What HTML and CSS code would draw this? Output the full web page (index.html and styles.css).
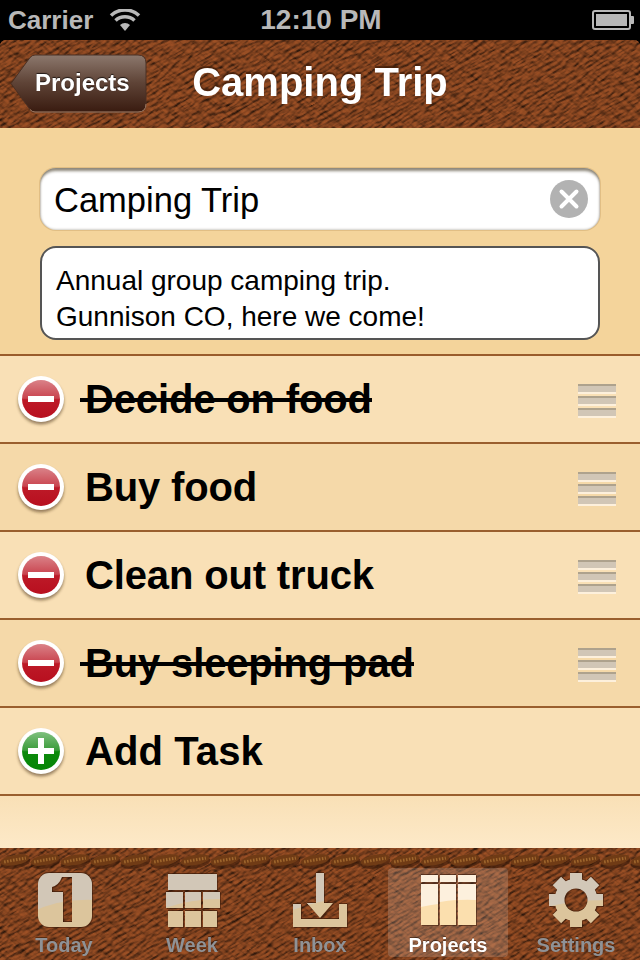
FILE: index.html
```html
<!DOCTYPE html>
<html lang="en">
<head>
<meta charset="utf-8">
<title>Camping Trip</title>
<link rel="stylesheet" href="styles.css">
</head>
<body>
<svg class="defs" width="0" height="0" aria-hidden="true">
  <defs>
    <filter id="leather" x="0" y="0" width="100%" height="100%" color-interpolation-filters="sRGB">
      <feTurbulence type="fractalNoise" baseFrequency="0.1 0.36" numOctaves="3" seed="7" result="n"/>
      <feDiffuseLighting in="n" surfaceScale="2.4" diffuseConstant="1.08" lighting-color="#9c5024" result="l">
        <feDistantLight azimuth="90" elevation="55"/>
      </feDiffuseLighting>
      <feComposite in="l" in2="SourceGraphic" operator="in"/>
    </filter>
    <filter id="leatherB" x="0" y="0" width="100%" height="100%" color-interpolation-filters="sRGB">
      <feTurbulence type="fractalNoise" baseFrequency="0.035 0.22" numOctaves="3" seed="23" result="n"/>
      <feDiffuseLighting in="n" surfaceScale="2.4" diffuseConstant="1.05" lighting-color="#8a4520" result="l">
        <feDistantLight azimuth="90" elevation="55"/>
      </feDiffuseLighting>
      <feComposite in="l" in2="SourceGraphic" operator="in"/>
    </filter>
    <linearGradient id="backGrad" x1="0" y1="0" x2="0" y2="1">
      <stop offset="0" stop-color="#8c786d"/>
      <stop offset=".48" stop-color="#5f4437"/>
      <stop offset="1" stop-color="#391b10"/>
    </linearGradient>
    <linearGradient id="redGrad" x1="0" y1="0" x2="0" y2="1">
      <stop offset="0" stop-color="#da8288"/>
      <stop offset=".48" stop-color="#c9444f"/>
      <stop offset=".52" stop-color="#bd1a28"/>
      <stop offset="1" stop-color="#b80f1f"/>
    </linearGradient>
    <linearGradient id="greenGrad" x1="0" y1="0" x2="0" y2="1">
      <stop offset="0" stop-color="#7fc07f"/>
      <stop offset=".48" stop-color="#3a9c3a"/>
      <stop offset=".52" stop-color="#0b8a0b"/>
      <stop offset="1" stop-color="#068506"/>
    </linearGradient>
    <filter id="softShadow" x="-20%" y="-20%" width="140%" height="140%"><feGaussianBlur stdDeviation="1.600"/></filter>
    <pattern id="stitch" width="30" height="24" patternUnits="userSpaceOnUse">
      <g transform="rotate(-10 15 12)">
        <ellipse cx="15" cy="14.500" rx="15" ry="6" fill="#2f1406" opacity=".55"/>
        <ellipse cx="15" cy="12" rx="14.500" ry="5.200" fill="#703b15"/>
        <line x1="4" y1="12" x2="26" y2="12" stroke="#a0672c" stroke-width="3" stroke-dasharray="1.500 1.500"/>
      </g>
    </pattern>
    <mask id="gearMask" maskUnits="userSpaceOnUse" x="544" y="868" width="64" height="64">
      <circle cx="576" cy="900" r="21.500" fill="#fff"/>
      <g fill="#fff">
        <rect x="570" y="873" width="12" height="54"/>
        <rect x="549" y="894" width="54" height="12"/>
        <rect x="570" y="873" width="12" height="54" transform="rotate(45 576 900)"/>
        <rect x="570" y="873" width="12" height="54" transform="rotate(-45 576 900)"/>
      </g>
      <circle cx="576" cy="900" r="11.500" fill="#000"/>
    </mask>
    <clipPath id="inboxClip">
      <path d="M316 873h8v30h9l-13 15-13-15h9z"/>
      <path d="M293 904h8v15h38v-15h8v23h-54z"/>
    </clipPath>
    <clipPath id="weekClip">
      <path d="M168 874h49v16h-49zM166 892h17v16h-17zM185 892h16v16h-16zM203 892h17v16h-17zM168 911h15v16h-15zM185 911h16v16h-16zM203 911h14v16h-14z"/>
    </clipPath>
    <mask id="todayMask" maskUnits="userSpaceOnUse" x="32" y="870" width="64" height="60">
      <rect x="38" y="873" width="54" height="54" rx="11" fill="#fff"/>
      <path d="M62 877h10v45h-9V892H52v-5q7-2 10-10z" fill="#000"/>
    </mask>
    <g id="minusIcon">
      <circle cx="27" cy="28.500" r="23" fill="#3a2410" opacity=".5" filter="url(#softShadow)"/>
      <circle cx="27" cy="26" r="23" fill="#fff"/>
      <circle cx="27" cy="26" r="19" fill="url(#redGrad)"/>
      <rect x="14" y="23" width="26" height="6" fill="#fff"/>
    </g>
  </defs>
</svg>

<div class="phone">
  <header class="status">
    <div class="status-left">
      <span>Carrier</span>
      <svg class="wifi" viewBox="0 0 32 22" width="32" height="22"><path d="M16 22l-5-6a7.500 7.500 0 0 1 10 0z" fill="#b8b8b8"/><path d="M6.500 11.500a14 14 0 0 1 19 0M2 6.500a20.500 20.500 0 0 1 28 0" fill="none" stroke="#b8b8b8" stroke-width="3.600"/></svg>
    </div>
    <div class="status-time">12:10 PM</div>
    <div class="status-right">
      <svg class="battery" viewBox="0 0 42 20" width="42" height="20"><rect x="1" y="1" width="37" height="18" rx="2" fill="none" stroke="#b8b8b8" stroke-width="2"/><rect x="4" y="4" width="31" height="12" fill="#b8b8b8"/><path d="M39 6h2a1 1 0 0 1 1 1v6a1 1 0 0 1-1 1h-2z" fill="#b8b8b8"/></svg>
    </div>
  </header>

  <nav class="navbar">
    <div class="leather-base" aria-hidden="true">
      <svg class="leather-a" width="1000" height="1000"><rect width="1000" height="1000" fill="#000" filter="url(#leather)"/></svg>
      <svg class="leather-b" width="1000" height="1000"><rect width="1000" height="1000" fill="#000" filter="url(#leatherB)"/></svg>
    </div>
    <div class="nav-left">
      <a class="back">
        <svg class="back-shape" width="138" height="60" viewBox="0 0 138 60" aria-hidden="true"><path d="M1 29.500 20 3.500Q22 1 25 1H128Q136 1 136 9V50Q136 58 128 58H25Q22 58 20 55.500Z" fill="url(#backGrad)" stroke="#4a3024" stroke-width="1"/><path d="M20 55.500Q22 58 25 58H128Q136 58 136 50" fill="none" stroke="#a07a62" stroke-width="1"/></svg>
        <span class="back-label">Projects</span>
      </a>
    </div>
    <h1 class="title">Camping Trip</h1>
    <div class="nav-right"></div>
  </nav>

  <section class="details">
    <div class="name-field">
      <span class="name-text">Camping Trip</span>
      <svg class="clear" width="38" height="38" viewBox="0 0 38 38" aria-hidden="true"><circle cx="19" cy="19" r="19" fill="#b2b2b2"/><path d="M11.500 11.500 26.500 26.500M26.500 11.500 11.500 26.500" stroke="#fff" stroke-width="4" stroke-linecap="round"/></svg>
    </div>
    <div class="notes">Annual group camping trip.<br>Gunnison CO, here we come!</div>
  </section>

  <ul class="tasks">
    <li class="task">
      <svg class="badge" width="54" height="54" viewBox="0 0 54 54" aria-hidden="true"><use href="#minusIcon"/></svg>
      <span class="task-text done">Decide on food</span>
      <span class="handle"><i></i><i></i><i></i></span>
    </li>
    <li class="task alt">
      <svg class="badge" width="54" height="54" viewBox="0 0 54 54" aria-hidden="true"><use href="#minusIcon"/></svg>
      <span class="task-text">Buy food</span>
      <span class="handle"><i></i><i></i><i></i></span>
    </li>
    <li class="task">
      <svg class="badge" width="54" height="54" viewBox="0 0 54 54" aria-hidden="true"><use href="#minusIcon"/></svg>
      <span class="task-text">Clean out truck</span>
      <span class="handle"><i></i><i></i><i></i></span>
    </li>
    <li class="task alt">
      <svg class="badge" width="54" height="54" viewBox="0 0 54 54" aria-hidden="true"><use href="#minusIcon"/></svg>
      <span class="task-text done">Buy sleeping pad</span>
      <span class="handle"><i></i><i></i><i></i></span>
    </li>
    <li class="task">
      <svg class="badge" width="54" height="54" viewBox="0 0 54 54" aria-hidden="true">
        <circle cx="27" cy="28.500" r="23" fill="#3a2410" opacity=".5" filter="url(#softShadow)"/>
        <circle cx="27" cy="26" r="23" fill="#fff"/>
        <circle cx="27" cy="26" r="19" fill="url(#greenGrad)"/>
        <path d="M24 13h6v10h10v6H30v10h-6V29H14v-6h10z" fill="#fff"/>
      </svg>
      <span class="task-text add">Add Task</span>
    </li>
  </ul>
  <div class="filler"></div>

  <footer class="tabbar">
    <div class="leather-base" aria-hidden="true">
      <svg class="leather-a" width="1000" height="1000"><rect width="1000" height="1000" fill="#000" filter="url(#leather)"/></svg>
      <svg class="leather-b" width="1000" height="1000"><rect width="1000" height="1000" fill="#000" filter="url(#leatherB)"/></svg>
      <svg class="stitches" width="640" height="26"><rect width="640" height="24" fill="url(#stitch)"/></svg>
    </div>
    <a class="tab">
      <svg class="tab-icon" width="64" height="60" viewBox="32 870 64 60" aria-hidden="true"><g mask="url(#todayMask)"><rect x="32" y="870" width="64" height="60" fill="#dcc59c"/><path d="M32 912Q60 898 96 900V870H32z" fill="#d2c7b7"/></g></svg>
      <span class="tab-label">Today</span>
    </a>
    <a class="tab">
      <svg class="tab-icon" width="64" height="60" viewBox="160 870 64 60" aria-hidden="true"><g clip-path="url(#weekClip)"><rect x="160" y="870" width="64" height="60" fill="#dcc59c"/><path d="M160 910Q190 898 224 899V870H160z" fill="#d2c7b7"/></g></svg>
      <span class="tab-label">Week</span>
    </a>
    <a class="tab">
      <svg class="tab-icon" width="64" height="60" viewBox="288 870 64 60" aria-hidden="true"><g clip-path="url(#inboxClip)"><rect x="288" y="870" width="64" height="60" fill="#dcc59c"/><path d="M288 912Q316 900 352 897V870H288z" fill="#d2c7b7"/></g></svg>
      <span class="tab-label">Inbox</span>
    </a>
    <a class="tab active">
      <svg class="tab-icon" width="64" height="60" viewBox="416 870 64 60" aria-hidden="true">
        <path d="M421 875h17v7h-17zM440 875h16v7h-16zM458 875h18v7h-18z" fill="#fdf0dd"/>
        <path d="M421 884h17v41h-17zM440 884h16v41h-16zM458 884h18v41h-18z" fill="#fbdfae"/>
        <path d="M421 884h17v20q-8 1-17 3zM440 884h16v16q-8 .500-16 2zM458 884h18v16q-8-.500-18 0z" fill="#fdf0dd"/>
      </svg>
      <span class="tab-label">Projects</span>
    </a>
    <a class="tab">
      <svg class="tab-icon" width="64" height="60" viewBox="544 870 64 60" aria-hidden="true"><g mask="url(#gearMask)"><rect x="544" y="870" width="64" height="60" fill="#dcc59c"/><path d="M544 908Q570 900 608 900V870H544z" fill="#d2c7b7"/></g></svg>
      <span class="tab-label">Settings</span>
    </a>
  </footer>
</div>
</body>
</html>
```
FILE: styles.css
```css
* { box-sizing: border-box; }
html, body { margin: 0; padding: 0; background: #000; }
body { width: 640px; height: 960px; overflow: hidden; font-family: "Liberation Sans", Arial, sans-serif; }
.defs { position: absolute; width: 0; height: 0; }
.phone { width: 640px; height: 960px; display: flex; flex-direction: column; background: #000; }

.status { height: 40px; flex: none; display: grid; grid-template-columns: 1fr auto 1fr; align-items: center; padding: 0 6px 0 8px; color: #b8b8b8; font-weight: 700; font-size: 26px; }
.status-left { display: flex; align-items: center; gap: 16px; }
.status-time { text-align: center; font-size: 28px; }
.status-right { display: flex; justify-content: flex-end; }
.wifi { margin-top: -1px; }

.navbar { position: relative; height: 88px; flex: none; display: grid; grid-template-columns: 1fr auto 1fr; align-items: center; border-radius: 6px 6px 0 0; overflow: hidden; background: #7d4020; }
.leather-base { position: absolute; inset: 0; overflow: hidden; }
.leather-a { position: absolute; left: -180px; top: -450px; display: block; transform: rotate(-30deg); will-change: transform; }
.leather-b { position: absolute; left: -180px; top: -450px; display: block; opacity: .35; transform: rotate(38deg); will-change: transform; }
.stitches { position: absolute; left: 0; top: 0; display: block; }
.nav-left { position: relative; padding: 0 0 1px 10px; }
.back { position: relative; display: flex; align-items: center; width: 138px; height: 60px; padding-left: 25px; }
.back-shape { position: absolute; left: 0; top: 0; }
.back-label { position: relative; top: -1px; color: #fff; font-size: 24px; font-weight: 700; text-shadow: 0 -1px 1px rgba(0,0,0,.7); }
.title { position: relative; margin: 0; padding-bottom: 3px; color: #fff; font-size: 40px; font-weight: 700; text-shadow: 0 -2px 1px rgba(60,25,5,.75); }

.details { height: 228px; flex: none; padding: 40px 40px 0; background: #f4d49b; border-bottom: 2px solid #9a5c2b; }
.name-field { height: 62px; display: flex; align-items: center; justify-content: space-between; padding: 0 12px 0 14px; background: #fff; border-radius: 16px; font-size: 34.500px; color: #000; box-shadow: inset 0 5px 3px -2px rgba(80,70,50,.65), inset 0 -3px 2px -2px rgba(80,70,50,.25), inset 3px 0 2px -2px rgba(80,70,50,.35), inset -3px 0 2px -2px rgba(80,70,50,.35), 0 0 0 1px rgba(190,150,90,.35); }
.name-text { padding-top: 2px; }
.clear { flex: none; }
.notes { height: 94px; margin-top: 16px; padding: 15px 14px 0; background: #fff; border: 2px solid #555; border-radius: 16px; font-size: 28px; line-height: 36px; color: #000; }

.tasks { list-style: none; margin: 0; padding: 0; flex: none; }
.task { height: 88px; display: flex; align-items: center; padding: 2px 24px 2px 14px; background: #f9e0b6; border-bottom: 2px solid #9a5f2e; }
.task.alt { background: #f5d9a9; }
.badge { flex: none; margin-top: 2px; overflow: visible; }
.task-text { position: relative; margin-left: 17px; font-size: 40px; font-weight: 700; color: #000; letter-spacing: -.15px; }
.task-text.add { letter-spacing: .1px; }
.task-text.done::after { content: ""; position: absolute; left: -5px; right: 0; top: 50%; height: 4px; margin-top: -1px; background: #000; }
.handle { margin: 4px 0 0 auto; width: 38px; display: flex; flex-direction: column; gap: 2px; }
.handle i { display: block; height: 10px; background: #d1c6b6; border-top: 2px solid #aea28d; border-bottom: 2px solid #fdf0dc; }

.filler { flex: 1; background: linear-gradient(#f9e0b6, #fde9c8); }

.tabbar { position: relative; height: 112px; flex: none; display: grid; grid-template-columns: repeat(5, 1fr); padding: 20px 0 4px; overflow: hidden; background: #7d4020; }
.tab { position: relative; display: flex; flex-direction: column; align-items: center; margin: 0 4px; padding-top: 2px; border-radius: 4px; }
.tab.active { background: rgba(255,255,255,.16); }
.tab-icon { flex: none; filter: drop-shadow(0 -1px 0 rgba(50,20,5,.6)) drop-shadow(1px 1px 0 rgba(50,20,5,.5)); }
.tab-label { margin-top: 3px; font-size: 20px; line-height: 24px; font-weight: 700; color: #8f9296; text-shadow: 0 -1px 0 rgba(40,15,0,.5); }
.tab.active .tab-label { color: #fff; }
```
